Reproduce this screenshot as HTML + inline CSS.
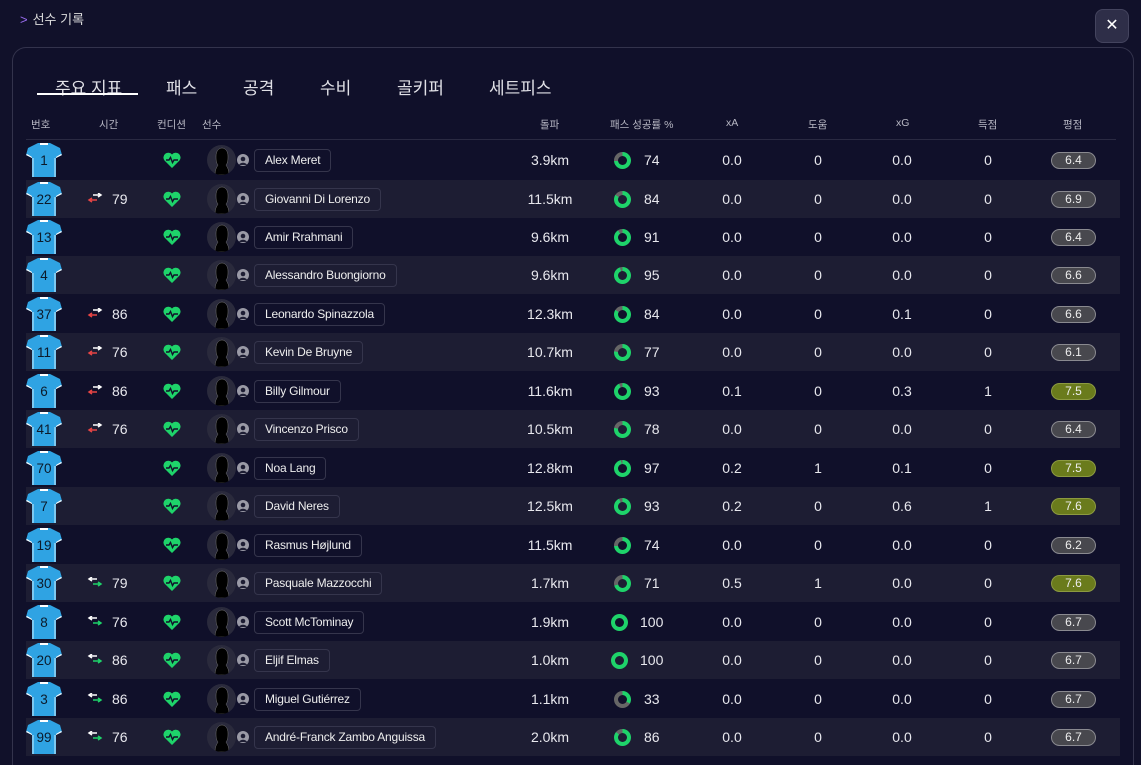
<!DOCTYPE html>
<html><head><meta charset="utf-8"><style>
*{margin:0;padding:0;box-sizing:border-box}
html,body{width:1141px;height:765px;overflow:hidden}
body{background:#11112a;font-family:"Liberation Sans","Noto Sans CJK KR",sans-serif;color:#e8e8ee;position:relative}
.title{position:absolute;left:20px;top:9px;font-size:13px;color:#ddd}
.title b{color:#9a6cf0;font-weight:normal;margin-right:5px}
.close{position:absolute;left:1095px;top:9px;width:34px;height:34px;border-radius:8px;background:#2e2e48;border:1px solid #44445e;color:#fff;font-size:16px;text-align:center;line-height:31px}
.panel{position:absolute;left:12px;top:47px;width:1122px;height:718px;border:1px solid #33334c;border-bottom:none;border-radius:14px 14px 0 0;background:#10102a}
.tab{position:absolute;top:74px;font-size:17px;color:#e0e0e6}
.ul{position:absolute;left:37px;top:93px;width:101px;height:2px;background:#fff}
.hd{position:absolute;top:117px;font-size:10.5px;color:#b8b8c4}
.hline{position:absolute;left:26px;top:139px;width:1090px;height:1px;background:#2a2a42}
.row{position:absolute;left:26px;width:1094px;height:38px}
.row.alt{background:#1d1d33}
.row>*{position:absolute}
.c{text-align:center;font-size:14px;top:11px}
.jer{left:0;top:1px}
.num{left:0;top:12px;width:36px;text-align:center;font-size:13.5px;color:#0c1a2a}
.arr{left:61px;top:13px}
.t{left:86px;top:11px;font-size:14px}
.heart{left:137px;top:11px}
.av{left:181px;top:4px;width:29px;height:30px;border-radius:50%;background:#2a2a3c;overflow:hidden}
.pi{left:211px;top:13px;width:12px;height:12px}
.name{left:228px;top:8px;height:23px;border:1px solid #35354c;border-radius:4px;padding:0 10px;font-size:12px;letter-spacing:-0.2px;line-height:21px;color:#eee}
.dn{left:588px;top:11px;width:17px;height:17px;border-radius:50%}
.dn::after{content:"";position:absolute;left:4px;top:4px;width:9px;height:9px;border-radius:50%;background:#11112a}
.alt .dn::after{background:#1d1d33}
.rt{left:1025px;top:11px;width:45px;height:17px;border-radius:9px;background:#48484e;border:1px solid #8a8a90;font-size:12px;text-align:center;line-height:15px;color:#eee}
.rt.g{background:#6a7b1c;border-color:#8c9a40}
</style></head><body>
<div class="title"><b>&gt;</b>선수 기록</div>
<div class="close">✕</div>
<div class="panel"></div>
<div class="tab" style="left:55px">주요 지표</div><div class="ul"></div>
<div class="tab" style="left:166px">패스</div>
<div class="tab" style="left:243px">공격</div>
<div class="tab" style="left:320px">수비</div>
<div class="tab" style="left:397px">골키퍼</div>
<div class="tab" style="left:489px">세트피스</div>
<div class="hd" style="left:31px">번호</div>
<div class="hd" style="left:99px">시간</div>
<div class="hd" style="left:157px">컨디션</div>
<div class="hd" style="left:202px">선수</div>
<div class="hd" style="left:540px">돌파</div>
<div class="hd" style="left:610px">패스 성공률 %</div>
<div class="hd" style="left:726px">xA</div>
<div class="hd" style="left:808px">도움</div>
<div class="hd" style="left:896px">xG</div>
<div class="hd" style="left:978px">득점</div>
<div class="hd" style="left:1063px">평점</div>
<div class="hline"></div>
<svg width="0" height="0" style="position:absolute"><defs>
<symbol id="j" viewBox="0 0 36 36"><path d="M12 1h12l10 5 2 7-6 3v19H6V16L0 13l2-7z" fill="#2fa3e3"/><path d="M14 1h8v2h-8z" fill="#fff"/><path d="M0 13l6 3v-1L1 12zM36 13l-6 3v-1l5-3z" fill="#fff"/><path d="M6 16v19h2V16zM30 16v19h-2V16z" fill="#7cc8f0"/></symbol>
<symbol id="h" viewBox="0 0 18 16"><path d="M9 16L1.5 8.5A4.5 4.5 0 0 1 9 2.5a4.5 4.5 0 0 1 7.5 6z" fill="#1ed36a"/><path d="M3 8h3l1.5-2.5 2 5 1.5-2.5h4" stroke="#11112a" stroke-width="1.4" fill="none"/></symbol>
<symbol id="a" viewBox="0 0 29 30"><path d="M8 30c0-6 2-8 3-10-2-2-2-6-2-9 0-5 3-8 6-8s6 3 6 8c0 3 0 7-2 9 1 2 3 4 3 10z" fill="#000" stroke="#777" stroke-width=".5"/></symbol>
<symbol id="p" viewBox="0 0 12 12"><circle cx="6" cy="6" r="6" fill="#9a9aa6"/><circle cx="6" cy="5" r="2.3" fill="#1d1d33"/><path d="M2 11c1-3 7-3 8 0z" fill="#1d1d33"/></symbol>
<symbol id="sr" viewBox="0 0 16 10"><path d="M6 2h8M11 0l3 2-3 2" stroke="#fff" stroke-width="1.5" fill="none"/><path d="M10 7H2M5 5L2 7l3 2" stroke="#e84545" stroke-width="1.5" fill="none"/></symbol>
<symbol id="sg" viewBox="0 0 16 10"><path d="M2 2h8M5 0L2 2l3 2" stroke="#fff" stroke-width="1.5" fill="none"/><path d="M6 7h8M11 5l3 2-3 2" stroke="#1ed36a" stroke-width="1.5" fill="none"/></symbol>
</defs></svg>

<div class="row" style="top:141px"><svg class="jer" width="36" height="36"><use href="#j"/></svg><span class="num">1</span><svg class="heart" width="18" height="16"><use href="#h"/></svg><svg class="av" width="29" height="30"><use href="#a"/></svg><svg class="pi"><use href="#p"/></svg><span class="name">Alex Meret</span><span class="c" style="left:494px;width:60px">3.9km</span><span class="dn" style="background:conic-gradient(#1ed36a 0 74%,#666 0)"></span><span class="c" style="left:618px">74</span><span class="c" style="left:686px;width:40px">0.0</span><span class="c" style="left:782px;width:20px">0</span><span class="c" style="left:856px;width:40px">0.0</span><span class="c" style="left:952px;width:20px">0</span><span class="rt">6.4</span></div>

<div class="row alt" style="top:179.5px"><svg class="jer" width="36" height="36"><use href="#j"/></svg><span class="num">22</span><svg class="arr" width="16" height="10"><use href="#sr"/></svg><span class="t">79</span><svg class="heart" width="18" height="16"><use href="#h"/></svg><svg class="av" width="29" height="30"><use href="#a"/></svg><svg class="pi"><use href="#p"/></svg><span class="name">Giovanni Di Lorenzo</span><span class="c" style="left:494px;width:60px">11.5km</span><span class="dn" style="background:conic-gradient(#1ed36a 0 84%,#666 0)"></span><span class="c" style="left:618px">84</span><span class="c" style="left:686px;width:40px">0.0</span><span class="c" style="left:782px;width:20px">0</span><span class="c" style="left:856px;width:40px">0.0</span><span class="c" style="left:952px;width:20px">0</span><span class="rt">6.9</span></div>

<div class="row" style="top:218px"><svg class="jer" width="36" height="36"><use href="#j"/></svg><span class="num">13</span><svg class="heart" width="18" height="16"><use href="#h"/></svg><svg class="av" width="29" height="30"><use href="#a"/></svg><svg class="pi"><use href="#p"/></svg><span class="name">Amir Rrahmani</span><span class="c" style="left:494px;width:60px">9.6km</span><span class="dn" style="background:conic-gradient(#1ed36a 0 91%,#666 0)"></span><span class="c" style="left:618px">91</span><span class="c" style="left:686px;width:40px">0.0</span><span class="c" style="left:782px;width:20px">0</span><span class="c" style="left:856px;width:40px">0.0</span><span class="c" style="left:952px;width:20px">0</span><span class="rt">6.4</span></div>

<div class="row alt" style="top:256.4px"><svg class="jer" width="36" height="36"><use href="#j"/></svg><span class="num">4</span><svg class="heart" width="18" height="16"><use href="#h"/></svg><svg class="av" width="29" height="30"><use href="#a"/></svg><svg class="pi"><use href="#p"/></svg><span class="name">Alessandro Buongiorno</span><span class="c" style="left:494px;width:60px">9.6km</span><span class="dn" style="background:conic-gradient(#1ed36a 0 95%,#666 0)"></span><span class="c" style="left:618px">95</span><span class="c" style="left:686px;width:40px">0.0</span><span class="c" style="left:782px;width:20px">0</span><span class="c" style="left:856px;width:40px">0.0</span><span class="c" style="left:952px;width:20px">0</span><span class="rt">6.6</span></div>

<div class="row" style="top:294.9px"><svg class="jer" width="36" height="36"><use href="#j"/></svg><span class="num">37</span><svg class="arr" width="16" height="10"><use href="#sr"/></svg><span class="t">86</span><svg class="heart" width="18" height="16"><use href="#h"/></svg><svg class="av" width="29" height="30"><use href="#a"/></svg><svg class="pi"><use href="#p"/></svg><span class="name">Leonardo Spinazzola</span><span class="c" style="left:494px;width:60px">12.3km</span><span class="dn" style="background:conic-gradient(#1ed36a 0 84%,#666 0)"></span><span class="c" style="left:618px">84</span><span class="c" style="left:686px;width:40px">0.0</span><span class="c" style="left:782px;width:20px">0</span><span class="c" style="left:856px;width:40px">0.1</span><span class="c" style="left:952px;width:20px">0</span><span class="rt">6.6</span></div>

<div class="row alt" style="top:333.3px"><svg class="jer" width="36" height="36"><use href="#j"/></svg><span class="num">11</span><svg class="arr" width="16" height="10"><use href="#sr"/></svg><span class="t">76</span><svg class="heart" width="18" height="16"><use href="#h"/></svg><svg class="av" width="29" height="30"><use href="#a"/></svg><svg class="pi"><use href="#p"/></svg><span class="name">Kevin De Bruyne</span><span class="c" style="left:494px;width:60px">10.7km</span><span class="dn" style="background:conic-gradient(#1ed36a 0 77%,#666 0)"></span><span class="c" style="left:618px">77</span><span class="c" style="left:686px;width:40px">0.0</span><span class="c" style="left:782px;width:20px">0</span><span class="c" style="left:856px;width:40px">0.0</span><span class="c" style="left:952px;width:20px">0</span><span class="rt">6.1</span></div>

<div class="row" style="top:371.8px"><svg class="jer" width="36" height="36"><use href="#j"/></svg><span class="num">6</span><svg class="arr" width="16" height="10"><use href="#sr"/></svg><span class="t">86</span><svg class="heart" width="18" height="16"><use href="#h"/></svg><svg class="av" width="29" height="30"><use href="#a"/></svg><svg class="pi"><use href="#p"/></svg><span class="name">Billy Gilmour</span><span class="c" style="left:494px;width:60px">11.6km</span><span class="dn" style="background:conic-gradient(#1ed36a 0 93%,#666 0)"></span><span class="c" style="left:618px">93</span><span class="c" style="left:686px;width:40px">0.1</span><span class="c" style="left:782px;width:20px">0</span><span class="c" style="left:856px;width:40px">0.3</span><span class="c" style="left:952px;width:20px">1</span><span class="rt g">7.5</span></div>

<div class="row alt" style="top:410.3px"><svg class="jer" width="36" height="36"><use href="#j"/></svg><span class="num">41</span><svg class="arr" width="16" height="10"><use href="#sr"/></svg><span class="t">76</span><svg class="heart" width="18" height="16"><use href="#h"/></svg><svg class="av" width="29" height="30"><use href="#a"/></svg><svg class="pi"><use href="#p"/></svg><span class="name">Vincenzo Prisco</span><span class="c" style="left:494px;width:60px">10.5km</span><span class="dn" style="background:conic-gradient(#1ed36a 0 78%,#666 0)"></span><span class="c" style="left:618px">78</span><span class="c" style="left:686px;width:40px">0.0</span><span class="c" style="left:782px;width:20px">0</span><span class="c" style="left:856px;width:40px">0.0</span><span class="c" style="left:952px;width:20px">0</span><span class="rt">6.4</span></div>

<div class="row" style="top:448.8px"><svg class="jer" width="36" height="36"><use href="#j"/></svg><span class="num">70</span><svg class="heart" width="18" height="16"><use href="#h"/></svg><svg class="av" width="29" height="30"><use href="#a"/></svg><svg class="pi"><use href="#p"/></svg><span class="name">Noa Lang</span><span class="c" style="left:494px;width:60px">12.8km</span><span class="dn" style="background:conic-gradient(#1ed36a 0 97%,#666 0)"></span><span class="c" style="left:618px">97</span><span class="c" style="left:686px;width:40px">0.2</span><span class="c" style="left:782px;width:20px">1</span><span class="c" style="left:856px;width:40px">0.1</span><span class="c" style="left:952px;width:20px">0</span><span class="rt g">7.5</span></div>

<div class="row alt" style="top:487.2px"><svg class="jer" width="36" height="36"><use href="#j"/></svg><span class="num">7</span><svg class="heart" width="18" height="16"><use href="#h"/></svg><svg class="av" width="29" height="30"><use href="#a"/></svg><svg class="pi"><use href="#p"/></svg><span class="name">David Neres</span><span class="c" style="left:494px;width:60px">12.5km</span><span class="dn" style="background:conic-gradient(#1ed36a 0 93%,#666 0)"></span><span class="c" style="left:618px">93</span><span class="c" style="left:686px;width:40px">0.2</span><span class="c" style="left:782px;width:20px">0</span><span class="c" style="left:856px;width:40px">0.6</span><span class="c" style="left:952px;width:20px">1</span><span class="rt g">7.6</span></div>

<div class="row" style="top:525.7px"><svg class="jer" width="36" height="36"><use href="#j"/></svg><span class="num">19</span><svg class="heart" width="18" height="16"><use href="#h"/></svg><svg class="av" width="29" height="30"><use href="#a"/></svg><svg class="pi"><use href="#p"/></svg><span class="name">Rasmus Højlund</span><span class="c" style="left:494px;width:60px">11.5km</span><span class="dn" style="background:conic-gradient(#1ed36a 0 74%,#666 0)"></span><span class="c" style="left:618px">74</span><span class="c" style="left:686px;width:40px">0.0</span><span class="c" style="left:782px;width:20px">0</span><span class="c" style="left:856px;width:40px">0.0</span><span class="c" style="left:952px;width:20px">0</span><span class="rt">6.2</span></div>

<div class="row alt" style="top:564.2px"><svg class="jer" width="36" height="36"><use href="#j"/></svg><span class="num">30</span><svg class="arr" width="16" height="10"><use href="#sg"/></svg><span class="t">79</span><svg class="heart" width="18" height="16"><use href="#h"/></svg><svg class="av" width="29" height="30"><use href="#a"/></svg><svg class="pi"><use href="#p"/></svg><span class="name">Pasquale Mazzocchi</span><span class="c" style="left:494px;width:60px">1.7km</span><span class="dn" style="background:conic-gradient(#1ed36a 0 71%,#666 0)"></span><span class="c" style="left:618px">71</span><span class="c" style="left:686px;width:40px">0.5</span><span class="c" style="left:782px;width:20px">1</span><span class="c" style="left:856px;width:40px">0.0</span><span class="c" style="left:952px;width:20px">0</span><span class="rt g">7.6</span></div>

<div class="row" style="top:602.6px"><svg class="jer" width="36" height="36"><use href="#j"/></svg><span class="num">8</span><svg class="arr" width="16" height="10"><use href="#sg"/></svg><span class="t">76</span><svg class="heart" width="18" height="16"><use href="#h"/></svg><svg class="av" width="29" height="30"><use href="#a"/></svg><svg class="pi"><use href="#p"/></svg><span class="name">Scott McTominay</span><span class="c" style="left:494px;width:60px">1.9km</span><span class="dn" style="left:585px;background:conic-gradient(#1ed36a 0 100%,#666 0)"></span><span class="c" style="left:614px">100</span><span class="c" style="left:686px;width:40px">0.0</span><span class="c" style="left:782px;width:20px">0</span><span class="c" style="left:856px;width:40px">0.0</span><span class="c" style="left:952px;width:20px">0</span><span class="rt">6.7</span></div>

<div class="row alt" style="top:641.1px"><svg class="jer" width="36" height="36"><use href="#j"/></svg><span class="num">20</span><svg class="arr" width="16" height="10"><use href="#sg"/></svg><span class="t">86</span><svg class="heart" width="18" height="16"><use href="#h"/></svg><svg class="av" width="29" height="30"><use href="#a"/></svg><svg class="pi"><use href="#p"/></svg><span class="name">Eljif Elmas</span><span class="c" style="left:494px;width:60px">1.0km</span><span class="dn" style="left:585px;background:conic-gradient(#1ed36a 0 100%,#666 0)"></span><span class="c" style="left:614px">100</span><span class="c" style="left:686px;width:40px">0.0</span><span class="c" style="left:782px;width:20px">0</span><span class="c" style="left:856px;width:40px">0.0</span><span class="c" style="left:952px;width:20px">0</span><span class="rt">6.7</span></div>

<div class="row" style="top:679.6px"><svg class="jer" width="36" height="36"><use href="#j"/></svg><span class="num">3</span><svg class="arr" width="16" height="10"><use href="#sg"/></svg><span class="t">86</span><svg class="heart" width="18" height="16"><use href="#h"/></svg><svg class="av" width="29" height="30"><use href="#a"/></svg><svg class="pi"><use href="#p"/></svg><span class="name">Miguel Gutiérrez</span><span class="c" style="left:494px;width:60px">1.1km</span><span class="dn" style="background:conic-gradient(#1ed36a 0 33%,#666 0)"></span><span class="c" style="left:618px">33</span><span class="c" style="left:686px;width:40px">0.0</span><span class="c" style="left:782px;width:20px">0</span><span class="c" style="left:856px;width:40px">0.0</span><span class="c" style="left:952px;width:20px">0</span><span class="rt">6.7</span></div>

<div class="row alt" style="top:718px"><svg class="jer" width="36" height="36"><use href="#j"/></svg><span class="num">99</span><svg class="arr" width="16" height="10"><use href="#sg"/></svg><span class="t">76</span><svg class="heart" width="18" height="16"><use href="#h"/></svg><svg class="av" width="29" height="30"><use href="#a"/></svg><svg class="pi"><use href="#p"/></svg><span class="name">André-Franck Zambo Anguissa</span><span class="c" style="left:494px;width:60px">2.0km</span><span class="dn" style="background:conic-gradient(#1ed36a 0 86%,#666 0)"></span><span class="c" style="left:618px">86</span><span class="c" style="left:686px;width:40px">0.0</span><span class="c" style="left:782px;width:20px">0</span><span class="c" style="left:856px;width:40px">0.0</span><span class="c" style="left:952px;width:20px">0</span><span class="rt">6.7</span></div>
</body></html>
